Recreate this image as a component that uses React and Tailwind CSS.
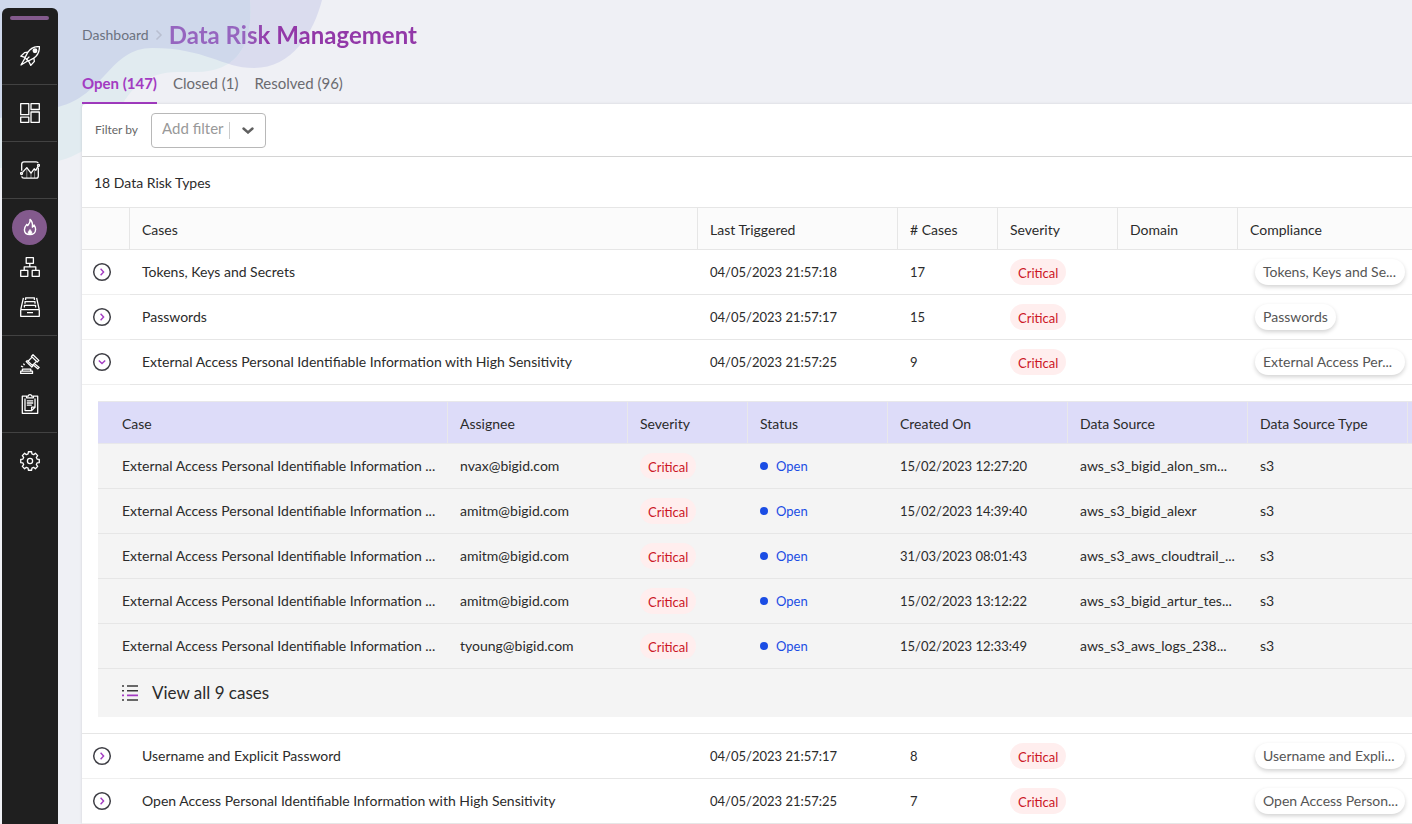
import { Fragment, useState } from 'react'

const risks = [
  { name: 'Tokens, Keys and Secrets', tag: 'Tokens, Keys and Se...', triggered: '04/05/2023 21:57:18', count: 17 },
  { name: 'Passwords', triggered: '04/05/2023 21:57:17', count: 15 },
  { name: 'External Access Personal Identifiable Information with High Sensitivity', tag: 'External Access Per...', triggered: '04/05/2023 21:57:25', count: 9 },
  { name: 'Username and Explicit Password', tag: 'Username and Expli...', triggered: '04/05/2023 21:57:17', count: 8 },
  { name: 'Open Access Personal Identifiable Information with High Sensitivity', tag: 'Open Access Person...', triggered: '04/05/2023 21:57:25', count: 7 },
]

const caseName = 'External Access Personal Identifiable Information ...'

const cases = [
  { assignee: 'nvax@bigid.com', created: '15/02/2023 12:27:20', source: 'aws_s3_bigid_alon_sm...' },
  { assignee: 'amitm@bigid.com', created: '15/02/2023 14:39:40', source: 'aws_s3_bigid_alexr' },
  { assignee: 'amitm@bigid.com', created: '31/03/2023 08:01:43', source: 'aws_s3_aws_cloudtrail_...' },
  { assignee: 'amitm@bigid.com', created: '15/02/2023 13:12:22', source: 'aws_s3_bigid_artur_tes...' },
  { assignee: 'tyoung@bigid.com', created: '15/02/2023 12:33:49', source: 'aws_s3_aws_logs_238...' },
]

const tabs = ['Open (147)', 'Closed (1)', 'Resolved (96)']

const Icon = ({ children }) => (
  <svg viewBox="0 0 20 20" className="w-5 h-5" fill="none" stroke="currentColor" strokeWidth="1.3" strokeLinejoin="round" aria-hidden="true">
    {children}
  </svg>
)

const RocketIcon = () => (
  <Icon>
    <path d="M19.4.6C14 .4 10.2 2.600 7.600 6.600L5 11.600 8.400 15l5-2.600C17.400 9.800 19.600 6 19.400.6Z" />
    <path d="M7.800 6.200 4.600 6.600.8 10.200 5 11.400M13.800 12.200l.6 3.200-3.600 4L8.600 15M5 12.200 1 19l7-4.200M9.400 10.600 6 14" />
    <circle cx="15" cy="4.800" r="1.800" fill="currentColor" />
  </Icon>
)

const DashboardIcon = () => (
  <Icon>
    <path d="M.7.7h8.1v11H.7zM11 .7h8.300v5.800H11zM.7 14.200h8.100v5.100H.7zM11 9h8.300v10.300H11z" />
  </Icon>
)

const ChartIcon = () => (
  <Icon>
    <path d="M1.700 10.800V4.200c0-1.400.8-2.400 2.200-2.400h12.200c1 0 1.800.5 2.100 1.300M18.300 7.600v8.400c0 1.400-.8 2.200-2.200 2.200H3.900c-1.300 0-2-.6-2.200-1.800" />
    <path d="m2.500 12.400 4.300-4.800 4.200 5.600 3.200-4.400 1.600 1.600 2.200-4" />
    <path d="M6.800 8.500V18M11 13.500V18M14.600 9.500V18" strokeWidth=".8" opacity=".6" />
    <circle cx="1.500" cy="13.500" r="1" />
    <circle cx="18.500" cy="5.300" r="1" />
  </Icon>
)

const FlameIcon = () => (
  <svg viewBox="0 0 14 18" className="w-3.5 h-[18px]" fill="none" stroke="currentColor" strokeWidth="1.4" strokeLinejoin="round" aria-hidden="true">
    <path d="M7 1.400c.8 3.200-1.200 4.600-2.400 6.200L3.800 6.400C2.400 8 1.400 9.800 1.400 11.800c0 3 2.400 4.800 5.600 4.800s5.600-2 5.600-5c0-1.800-.6-3.200-1.600-4.600-.2 1.200-.8 1.800-1.600 2.200C9.800 5.800 9 3 7 1.400Z" />
    <path d="M7 11.200c-.8 1.400-2 2-2 3.400 0 1.200.8 2 2 2s2-.8 2-2c0-1.400-1.200-2-2-3.400Z" fill="currentColor" strokeWidth=".4" />
  </svg>
)

const SitemapIcon = () => (
  <Icon>
    <path d="M6.200.7h7.200v5.600H6.200zM.7 13.400h7.100v5.900H.7zM12.200 13.400h7.100v5.900h-7.100zM9.800 6.300v3.500M4.200 13.400V9.800h11.600v3.600" />
  </Icon>
)

const DrawerIcon = () => (
  <Icon>
    <path d="M.7 12.600h18.600v6.700H.7zM.8 12.400 3.400.8M19.200 12.400 16.600.8" />
    <path d="M5.600 3V.8h8.800V3M5 6.800V4.600h10v2.200M4.400 10.600V8.400h11.200v2.200M7 15.600h6" />
  </Icon>
)

const GavelIcon = () => (
  <Icon>
    <path d="m13 .8 5.800 5.600-1.600 1.600-5.800-5.600ZM11.800 3.400 8 7.200l4.400 4.200 3.800-3.800M7.600 6.200 6.200 7.600l5.600 5.400 1.400-1.400" />
    <path d="m14.200 9.400 5 4-1.400 1.400-4.800-4M.7 17.200h11.800v2.200H.7zM2.400 17v-1.800h8.400V17M1 12.200l2.200.8M3.400 9.600l1.200 1.600" />
  </Icon>
)

const ClipboardIcon = () => (
  <Icon>
    <path d="M6.600 2.200H2.300v17.100h15.400V2.200h-4.300M6.600 3.800V2.200h1.600C8.400 1.200 9 .7 10 .7s1.600.5 1.800 1.500h1.600v1.600Z" />
    <path d="M5 4.400v12.200h6.600l3.400-3.400V4.400M11.600 16.400v-3.200H15M6.800 6.800h6.400M6.800 9h6.400M6.800 11.200h5" />
  </Icon>
)

// Eight teeth, each one going root, tip, tip, root
const gearPath = Array.from({ length: 8 }, (_, tooth) =>
  [[-15, 7.3], [-10, 9.4], [10, 9.4], [15, 7.3]].map(([offset, r]) => {
    const angle = ((tooth * 45 + offset) * Math.PI) / 180
    return `${(10 + r * Math.cos(angle)).toFixed(2)} ${(10 + r * Math.sin(angle)).toFixed(2)}`
  }).join('L')
).join('L')

const GearIcon = () => (
  <Icon>
    <path d={`M${gearPath}Z`} />
    <circle cx="10" cy="10" r="2.600" />
  </Icon>
)

const navGroups = [
  [{ label: 'Get started', icon: RocketIcon }],
  [{ label: 'Dashboards', icon: DashboardIcon }],
  [{ label: 'Reports', icon: ChartIcon }],
  [
    { label: 'Data risk', icon: FlameIcon, active: true },
    { label: 'Inventory', icon: SitemapIcon },
    { label: 'Catalog', icon: DrawerIcon },
  ],
  [
    { label: 'Policies', icon: GavelIcon },
    { label: 'Tasks', icon: ClipboardIcon },
  ],
  [{ label: 'Settings', icon: GearIcon }],
]

const Sidebar = () => (
  <aside className="relative shrink-0 w-14 ml-0.5 mt-2 rounded-t-md bg-[#1f1f1f] text-white">
    <div className="h-5 pt-2 px-2">
      <div className="h-1 w-[39px] rounded-full bg-[#835a8d]" />
    </div>
    <nav className="divide-y divide-[#424242] mr-px">
      {navGroups.map((group, i) => (
        <ul key={i} className="py-2">
          {group.map(({ label, icon: NavIcon, active }) => (
            <li key={label} className="h-10 flex items-center justify-center">
              <a
                href="#"
                aria-label={label}
                className={active
                  ? 'w-[35px] h-[35px] rounded-full bg-[#835a8d] flex items-center justify-center'
                  : 'w-[35px] h-[35px] flex items-center justify-center'}
              >
                <NavIcon />
              </a>
            </li>
          ))}
        </ul>
      ))}
    </nav>
  </aside>
)

// Two overlapping blobs in the top left corner
const Backdrop = () => (
  <svg width="330" height="170" className="absolute top-0 left-0" aria-hidden="true">
    <defs>
      <clipPath id="lavender-blob">
        <path d="M0 0H322C314 32 292 68 254 68C222 68 206 48 152 48C110 48 104 96 58 107L0 118Z" />
      </clipPath>
    </defs>
    <path d="M0 0H322C314 32 292 68 254 68C222 68 206 48 152 48C110 48 104 96 58 107L0 118Z" fill="#dadcee" />
    <path d="M0 0H250C254 46 236 72 196 72C176 72 160 70 142 82C116 98 112 148 58 161L0 168Z" fill="#e1ebf0" />
    <path d="M0 0H250C254 46 236 72 196 72C176 72 160 70 142 82C116 98 112 148 58 161L0 168Z" fill="#cfd8eb" clipPath="url(#lavender-blob)" />
  </svg>
)

const SeverityBadge = () => (
  <span className="inline-flex items-center h-[26px] pt-0.5 px-2 rounded-full bg-[#ffeeee] text-[13px] text-[#cc1626]">Critical</span>
)

const ExpandButton = ({ open, onClick, label }) => (
  <button type="button" onClick={onClick} aria-expanded={open} aria-label={label} className="block">
    <svg viewBox="0 0 20 20" className="w-5 h-5" fill="none" aria-hidden="true">
      <circle cx="10" cy="10" r="8.3" stroke="#3f3f46" strokeWidth="1.5" />
      <path d={open ? 'm6.800 8.600 3.200 3 3.200-3' : 'm8.600 6.800 3 3.200-3 3.200'} stroke="#a33bc2" strokeWidth="1.4" />
    </svg>
  </button>
)

const CasesTable = () => (
  <div className="pl-4 py-4">
    <table className="w-full table-fixed border-separate border-spacing-0 text-left bg-[#f4f4f4]">
      <colgroup>
        <col />
        <col className="w-[180px]" />
        <col className="w-[120px]" />
        <col className="w-[140px]" />
        <col className="w-[180px]" />
        <col className="w-[180px]" />
        <col className="w-[160px]" />
        <col className="w-1" />
      </colgroup>
      <thead>
        <tr className="h-[43px] bg-[#dddcf9]">
          <th className="font-normal pt-0.5 pl-6 border-y border-r border-[#e8e8ea]">Case</th>
          {['Assignee', 'Severity', 'Status', 'Created On', 'Data Source', 'Data Source Type'].map((title) => (
            <th key={title} className="font-normal pt-0.5 px-3 border-y border-r border-[#e8e8ea]">{title}</th>
          ))}
          <td className="border-y border-[#e8e8ea]" />
        </tr>
      </thead>
      <tbody>
        {cases.map((item) => (
          <tr key={item.created} className="h-[45px]">
            <td className="pl-6 whitespace-nowrap border-b border-[#e6e6e6]">{caseName}</td>
            <td className="px-3 border-b border-[#e6e6e6]">{item.assignee}</td>
            <td className="px-3 border-b border-[#e6e6e6]"><SeverityBadge /></td>
            <td className="px-3 border-b border-[#e6e6e6] text-[13px] text-[#1b4de4]">
              <span className="flex items-center gap-2">
                <span className="w-2 h-2 rounded-full bg-[#1b4de4]" />
                Open
              </span>
            </td>
            <td className="px-3 text-[13px] border-b border-[#e6e6e6]">{item.created}</td>
            <td className="pl-3 whitespace-nowrap border-b border-[#e6e6e6]">{item.source}</td>
            <td className="px-3 border-b border-[#e6e6e6]">s3</td>
            <td className="border-b border-[#e6e6e6]" />
          </tr>
        ))}
      </tbody>
    </table>
    <div className="h-12 pl-6 flex items-center bg-[#f4f4f4]">
      <button type="button" className="flex items-center gap-3.5 text-[17px]">
        <svg viewBox="0 0 16 16" className="w-4 h-4" strokeWidth="1.6" aria-hidden="true">
          <path d="M0 1h2M5 1h11M0 5.700h2M5 5.700h11M0 15h2M5 15h11" stroke="#3a3a3a" />
          <path d="M0 10.400h2M5 10.400h11" stroke="#a33bc2" />
        </svg>
        View all 9 cases
      </button>
    </div>
  </div>
)

const RiskTable = () => {
  const [openRow, setOpenRow] = useState(2)

  return (
    <table className="w-full table-fixed border-separate border-spacing-0 text-left">
      <colgroup>
        <col className="w-12" />
        <col />
        <col className="w-[200px]" />
        <col className="w-[100px]" />
        <col className="w-[120px]" />
        <col className="w-[120px]" />
        <col className="w-[174px]" />
      </colgroup>
      <thead>
        <tr className="h-[43px] bg-[#fbfbfb]">
          <td className="border-y border-r border-[#e6e6e6]" />
          {['Cases', 'Last Triggered', '# Cases', 'Severity', 'Domain'].map((title) => (
            <th key={title} className="font-normal pt-0.5 px-3 border-y border-r border-[#e6e6e6]">{title}</th>
          ))}
          <th className="font-normal pt-0.5 px-3 border-y border-[#e6e6e6]">Compliance</th>
        </tr>
      </thead>
      <tbody>
        {risks.map((risk, i) => (
          <Fragment key={risk.name}>
            <tr className="h-[45px]">
              <td className="pl-2.5 border-b border-[#f0f0f0]">
                <ExpandButton
                  open={openRow === i}
                  label={`Show cases of ${risk.name}`}
                  onClick={() => setOpenRow(openRow === i ? null : i)}
                />
              </td>
              <td className="px-3 border-b border-[#e6e6e6]">{risk.name}</td>
              <td className="px-3 text-[13px] border-b border-[#e6e6e6]">{risk.triggered}</td>
              <td className="px-3 text-[13px] border-b border-[#e6e6e6]">{risk.count}</td>
              <td className="px-3 border-b border-[#e6e6e6]"><SeverityBadge /></td>
              <td className="px-3 border-b border-[#e6e6e6]" />
              <td className="pl-[17px] pr-[7px] border-b border-[#e6e6e6]">
                <span
                  className={`block h-[26px] leading-[26px] px-2 rounded-full whitespace-nowrap bg-white text-[#555] shadow-[0_2px_4px_rgba(0,0,0,0.18)] ${risk.tag ? 'w-full' : 'w-fit'}`}
                >
                  {risk.tag || risk.name}
                </span>
              </td>
            </tr>
            {openRow === i && (
              <tr>
                <td colSpan={7} className="border-b border-[#e6e6e6]"><CasesTable /></td>
              </tr>
            )}
          </Fragment>
        ))}
      </tbody>
    </table>
  )
}

export default function App() {
  const [tab, setTab] = useState(tabs[0])

  return (
    <div className="relative flex h-screen overflow-hidden bg-[#eff0f5] text-sm text-[#2b2b2b] font-['Lato',sans-serif]">
      <Backdrop />
      <Sidebar />
      <main className="relative flex-1 min-w-0 pl-6 flex flex-col">
        <header className="h-[70px] flex items-center text-sm text-[#6b7280]">
          <a href="#">Dashboard</a>
          <svg viewBox="0 0 8 12" className="w-2 h-3 mx-1.5" fill="none" stroke="#b9bfd0" strokeWidth="1.5" aria-hidden="true">
            <path d="m1.500 1.500 4.500 4.500-4.500 4.500" />
          </svg>
          <h1 className="text-2xl font-bold bg-linear-to-r from-[#9665bf] from-30% to-[#9238a8] to-40% bg-clip-text text-transparent">
            Data Risk Management
          </h1>
        </header>

        <div role="tablist" className="h-[34px] flex gap-4 text-[15px]">
          {tabs.map((name) => (
            <button
              key={name}
              type="button"
              role="tab"
              aria-selected={tab === name}
              onClick={() => setTab(name)}
              className={tab === name
                ? 'pb-1 border-b-2 border-[#a33bc2] font-bold text-[#a33bc2]'
                : 'pb-1 border-b-2 border-transparent text-[#6b6b70]'}
            >
              {name}
            </button>
          ))}
        </div>

        <section className="flex-1 min-h-0 overflow-hidden bg-white rounded-tl-sm shadow-[0_0_3px_rgba(0,0,0,0.12)]">
          <div className="h-[53px] pl-[13px] flex items-center gap-[13px] border-b border-[#d4d4d4]">
            <label htmlFor="filter" className="text-xs text-[#666]">Filter by</label>
            <div className="relative flex items-center">
              <select id="filter" className="w-[115px] h-[35px] pl-2.5 pb-0.5 appearance-none rounded border border-[#b8b8b8] bg-white text-[15px] text-[#999]">
                <option>Add filter</option>
              </select>
              <span className="absolute right-3 flex items-center gap-3 pointer-events-none">
                <span className="w-px h-[17px] bg-[#ccc]" />
                <svg viewBox="0 0 12 8" className="w-3 h-2" fill="none" stroke="#606060" strokeWidth="2.400" strokeLinecap="round" aria-hidden="true">
                  <path d="m1.500 2.500 4.500 4 4.500-4" />
                </svg>
              </span>
            </div>
          </div>
          <p className="h-[50px] pt-0.5 pl-3 flex items-center">18 Data Risk Types</p>
          <RiskTable />
        </section>
      </main>
    </div>
  )
}
